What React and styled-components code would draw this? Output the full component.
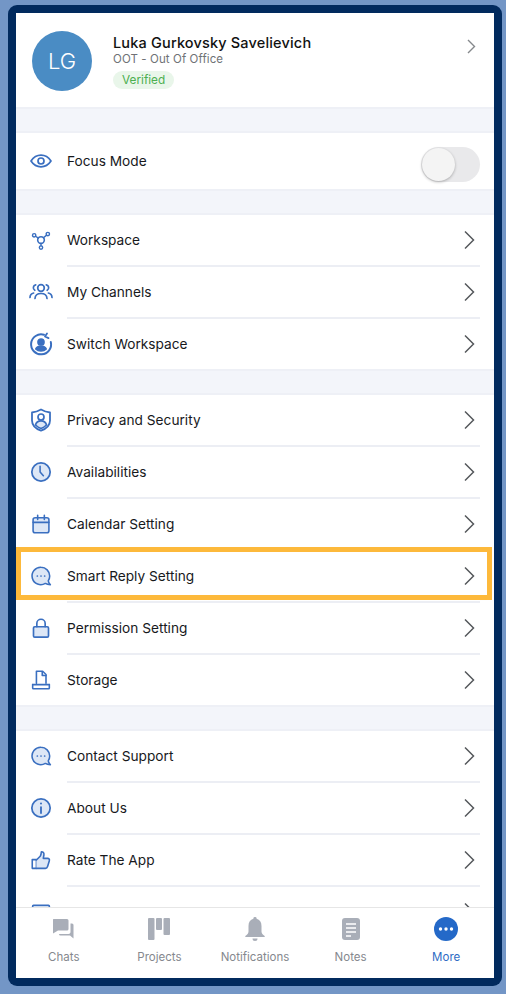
import React from 'react';
import styled, { createGlobalStyle } from 'styled-components';

const GlobalStyle = createGlobalStyle`
  html, body {
    margin: 0;
    padding: 0;
    background: #7396c6;
    font-family: Inter, "Noto Sans", sans-serif;
  }
  * { box-sizing: border-box; }
`;

const Page = styled.div`
  width: 506px;
  height: 994px;
  padding: 5px 4px 8px 8px;
  background: #7396c6;
`;

const Frame = styled.div`
  width: 494px;
  height: 981px;
  padding: 8px;
  background: #012a5e;
  border-radius: 9px;
`;

const Screen = styled.div`
  height: 100%;
  display: flex;
  flex-direction: column;
  background: #fff;
`;

const Scroll = styled.div`
  flex: 1;
  min-height: 0;
  overflow: hidden;
`;

const Profile = styled.div`
  height: 95px;
  display: flex;
  align-items: flex-start;
  padding: 18px 18px 0 16px;
`;

const Avatar = styled.div`
  width: 60px;
  height: 60px;
  flex: none;
  margin-right: 21px;
  border-radius: 50%;
  background: #4a8cc4;
  color: #fff;
  font-size: 22px;
  font-weight: 300;
  display: flex;
  align-items: center;
  justify-content: center;
`;

const ProfileInfo = styled.div`
  flex: 1;
  display: flex;
  flex-direction: column;
  align-items: flex-start;
  padding-top: 2px;
`;

const Name = styled.div`
  font-size: 14.5px;
  font-weight: 500;
  line-height: 19px;
  letter-spacing: 0.17px;
  color: #111;
`;

const Status = styled.div`
  font-size: 11.5px;
  line-height: 14px;
  letter-spacing: 0.1px;
  color: #6f7276;
`;

const Badge = styled.div`
  margin-top: 5px;
  height: 18px;
  padding: 0 9px;
  border-radius: 9px;
  background: #e9f6ea;
  color: #4caf50;
  font-size: 11.8px;
  line-height: 18px;
`;

const ProfileChevron = styled.div`
  align-self: flex-start;
  margin-top: 8px;
  display: flex;
`;

const Spacer = styled.div`
  height: 26px;
  margin: -1px 0;
  background: #f3f5fa;
  border-top: 2px solid #eef0f6;
  border-bottom: 2px solid #eef0f6;
`;

const FocusRow = styled.div`
  height: 58px;
  display: flex;
  align-items: center;
  padding: 0 14px 0 12px;
`;

const Row = styled.div`
  position: relative;
  height: 52px;
  display: flex;
  align-items: center;
  padding-left: 12px;

  ${(p) => p.$highlighted && `
    &::after {
      content: '';
      position: absolute;
      left: 0;
      right: 2px;
      top: -3px;
      bottom: 2px;
      border: 5.5px solid #fdb93b;
      z-index: 1;
    }
  `}
`;

const IconSlot = styled.div`
  width: 26px;
  height: 26px;
  flex: none;
  margin-right: 13px;
  display: flex;
  align-items: center;
  justify-content: center;
`;

const RowBody = styled.div`
  flex: 1;
  align-self: flex-start;
  height: ${(p) => (p.$last ? '52px' : '53px')};
  margin-right: 14px;
  display: flex;
  align-items: center;
  justify-content: space-between;
  padding-right: 5px;
  padding-top: ${(p) => (p.$last ? '0' : '1px')};
  border-bottom: ${(p) => (p.$last ? 'none' : '2px solid #eceef4')};
`;

const Label = styled.span`
  flex: ${(p) => (p.$grow ? 1 : 'none')};
  font-size: 13.7px;
  color: #17191c;
`;

const Toggle = styled.div`
  width: 59px;
  height: 35px;
  margin-top: 6px;
  padding: 1px;
  border-radius: 18px;
  background: #e9e9eb;
`;

const Knob = styled.div`
  width: 33px;
  height: 33px;
  border-radius: 50%;
  background: #f4f4f4;
  box-shadow: 0 1px 3px rgba(0, 0, 0, 0.28);
`;

const TabBar = styled.div`
  height: 71px;
  flex: none;
  display: grid;
  grid-template-columns: repeat(5, 1fr);
  background: #fff;
  border-top: 1px solid #e6e6e6;
`;

const Tab = styled.div`
  display: flex;
  flex-direction: column;
  align-items: center;
  padding-top: 8px;
  gap: 7px;
`;

const TabIcon = styled.div`
  height: 26px;
  display: flex;
  align-items: center;
  justify-content: center;
`;

const TabLabel = styled.span`
  font-size: 11.5px;
  line-height: 16px;
  color: ${(p) => (p.$active ? '#2f6cc4' : '#85888e')};
`;

const BLUE = '#3a6fc0';
const TINT = '#dde7f6';
const GREY = '#a9aeb8';

const Chevron = () => (
  <svg width="11" height="20" viewBox="0 0 11 20" fill="none">
    <path d="M1 1.5 9.5 10 1 18.5" stroke="#55585c" strokeWidth="1.5" />
  </svg>
);

const SmallChevron = () => (
  <svg width="9" height="15" viewBox="0 0 9 15" fill="none">
    <path d="M1 1 7.5 7.5 1 14" stroke="#85888c" strokeWidth="1.4" />
  </svg>
);

const Icon = ({ children, size = 24 }) => (
  <svg
    width={size}
    height={size}
    viewBox="0 0 24 24"
    fill="none"
    stroke={BLUE}
    strokeWidth="1.7"
    strokeLinecap="round"
    strokeLinejoin="round"
  >
    {children}
  </svg>
);

const EyeIcon = () => (
  <Icon>
    <path d="M2 12c2.600-3.900 6-5.800 10-5.800S19.400 8.100 22 12c-2.600 3.900-6 5.800-10 5.800S4.600 15.900 2 12Z" />
    <circle cx="12" cy="12" r="3" />
  </Icon>
);

const NodesIcon = () => (
  <Icon size={20}>
    <circle cx="12" cy="12" r="4" strokeWidth="1.900" />
    <circle cx="3.800" cy="6.300" r="2" />
    <circle cx="20.200" cy="4.800" r="2" />
    <circle cx="12" cy="21" r="2" />
    <path d="M5.500 7.500 8.800 9.700M18.700 6.200 15 9.300M12 16v3" />
  </Icon>
);

const PeopleIcon = () => (
  <Icon>
    <circle cx="12" cy="8" r="3.300" />
    <path d="M6 18.500c.2-3.300 2.600-5 6-5s5.800 1.700 6 5" />
    <path d="M6.700 4.800A3 3 0 0 0 5.800 10.300M17.300 4.800a3 3 0 0 1 .9 5.500" />
    <path d="M1 17.500c.1-2.500 1.500-4 3.600-4.500M23 17.500c-.1-2.500-1.500-4-3.600-4.500" />
  </Icon>
);

const SwitchIcon = () => (
  <Icon>
    <path d="M15 2.800A10 10 0 1 0 21.800 10" strokeWidth="2" />
    <path d="M18 1.500 16 4.500l3.500 1.600" strokeWidth="1.800" />
    <circle cx="12" cy="10" r="3" fill={BLUE} />
    <path d="M6.800 17c.8-2 2.800-3 5.200-3s4.400 1 5.200 3c-1.300 1.300-3.100 2-5.200 2s-3.900-.7-5.200-2Z" fill={BLUE} />
  </Icon>
);

const ShieldIcon = () => (
  <Icon>
    <path d="M12 1.500c2.800 1.600 5.600 2.600 9 3v8c0 4.700-3.600 8.200-9 10.200-5.400-2-9-5.500-9-10.200v-8c3.400-.4 6.200-1.400 9-3Z" strokeWidth="1.800" />
    <circle cx="12" cy="9" r="3" />
    <path d="M6.500 17c.6-2.800 2.700-4.200 5.500-4.200s4.900 1.400 5.500 4.200c-1.500 1.500-3.300 2.700-5.500 3.500-2.200-.8-4-2-5.500-3.500Z" fill={TINT} />
  </Icon>
);

const ClockIcon = () => (
  <Icon size={22}>
    <circle cx="12" cy="12" r="10" fill={TINT} strokeWidth="1.900" />
    <path d="M11 5.800V12l3.600 4" />
  </Icon>
);

const CalendarIcon = () => (
  <Icon size={20}>
    <rect x="2.500" y="4.500" width="19" height="18" rx="2.500" fill={TINT} strokeWidth="1.900" />
    <path d="M2.500 10h19M8 1.500v5M16 1.500v5" strokeWidth="1.900" />
  </Icon>
);

const ChatIcon = () => (
  <Icon size={22}>
    <path
      d="M12 2.500a9.500 9.500 0 0 1 9.500 9.500c0 2-.6 3.800-1.600 5.300.3 1.600 1.200 2.900 2.300 4.200-2.100 0-4-.4-5.500-1.400A9.500 9.500 0 1 1 12 2.500Z"
      fill={TINT}
    />
    <path d="M8 12h.01M12 12h.01M16 12h.01" strokeWidth="1.900" />
  </Icon>
);

const LockIcon = () => (
  <Icon size={20}>
    <rect x="3" y="10.500" width="18" height="12.500" rx="1.500" fill={TINT} strokeWidth="2" />
    <path d="M7 10.500V6.500a5 5 0 0 1 10 0v4" strokeWidth="2" />
  </Icon>
);

const StorageIcon = () => (
  <Icon size={20}>
    <path d="M6.500 16V1.500h7.500l4 4V16" strokeWidth="1.900" />
    <path d="M13.500 2v4.500H18" fill={TINT} strokeWidth="1.900" />
    <path d="M2 17.500v4c0 .6.400 1 1 1h18c.6 0 1-.4 1-1v-4" strokeWidth="1.900" />
    <path d="M2 17.500H22" strokeWidth="1.900" />
  </Icon>
);

const InfoIcon = () => (
  <Icon size={22}>
    <circle cx="12" cy="12" r="10" fill={TINT} strokeWidth="1.900" />
    <path d="M12 11v6.500" strokeWidth="2" />
    <path d="M12 7.100h.01" strokeWidth="2.200" />
  </Icon>
);

const ThumbIcon = () => (
  <Icon size={20}>
    <path d="M1.500 11.500h5v10.500h-5z" strokeWidth="1.900" />
    <path d="M6.500 12 11 7.500c1-1.300 1.300-3 1.500-5.500 2 0 3.300 1.500 3 4l-.8 4h5.300c1.500 0 2.500 1.300 2 2.800l-2 6.700c-.4 1.300-1.300 2.500-2.600 2.500H6.500" fill={TINT} strokeWidth="1.900" />
  </Icon>
);

const FlagIcon = () => (
  <Icon size={20}>
    <rect x="2" y="4" width="20" height="16" rx="1" strokeWidth="2" />
    <path d="M2 9h20" />
  </Icon>
);

const ChatsTab = () => (
  <svg width="24" height="22" viewBox="0 0 24 22" fill={GREY}>
    <path d="M1.500 1H15a1.500 1.500 0 0 1 1.500 1.500V11a1.500 1.500 0 0 1-1.500 1.500H6L1 15.500V1.800C1 1.400 1.200 1 1.500 1Z" />
    <path d="M18.500 5.500H20a1.500 1.500 0 0 1 1.500 1.500v13.500L18 17.500H8.500a1.500 1.500 0 0 1-1.500-1.500h9.500c1.100 0 2-.9 2-2Z" />
  </svg>
);

const ProjectsTab = () => (
  <svg width="22" height="22" viewBox="0 0 22 22" fill={GREY}>
    <rect x="0" y="0" width="6.500" height="22" rx="1" />
    <rect x="8" y="0" width="6" height="12" rx="1" />
    <rect x="15.500" y="0" width="6.500" height="17" rx="1" />
  </svg>
);

const BellTab = () => (
  <svg width="20" height="25" viewBox="0 0 20 25" fill={GREY}>
    <path d="M10 0a1.600 1.600 0 0 1 1.600 1.800C14.800 2.600 16.500 5 16.500 9v5.500c0 2 1.300 3.200 3.200 4.500v1H.3v-1c1.900-1.300 3.200-2.500 3.200-4.500V9c0-4 1.700-6.400 4.900-7.200A1.600 1.600 0 0 1 10 0Z" />
    <path d="M7.500 21.500h5a2.500 2.500 0 0 1-5 0Z" />
  </svg>
);

const NotesTab = () => (
  <svg width="18" height="22" viewBox="0 0 18 22">
    <rect width="18" height="22" rx="3" fill={GREY} />
    <path d="M4 6h10M4 10h10M4 14h10M4 18h5" stroke="#fff" strokeWidth="1.600" />
  </svg>
);

const MoreTab = () => (
  <svg width="24" height="24" viewBox="0 0 24 24">
    <circle cx="12" cy="12" r="12" fill="#2469c8" />
    <circle cx="6.500" cy="12" r="1.700" fill="#fff" />
    <circle cx="12" cy="12" r="1.700" fill="#fff" />
    <circle cx="17.500" cy="12" r="1.700" fill="#fff" />
  </svg>
);

const groups = [
  [
    { label: 'Workspace', icon: <NodesIcon /> },
    { label: 'My Channels', icon: <PeopleIcon /> },
    { label: 'Switch Workspace', icon: <SwitchIcon /> },
  ],
  [
    { label: 'Privacy and Security', icon: <ShieldIcon /> },
    { label: 'Availabilities', icon: <ClockIcon /> },
    { label: 'Calendar Setting', icon: <CalendarIcon /> },
    { label: 'Smart Reply Setting', icon: <ChatIcon />, highlighted: true },
    { label: 'Permission Setting', icon: <LockIcon /> },
    { label: 'Storage', icon: <StorageIcon /> },
  ],
  [
    { label: 'Contact Support', icon: <ChatIcon /> },
    { label: 'About Us', icon: <InfoIcon /> },
    { label: 'Rate The App', icon: <ThumbIcon /> },
    { label: 'Release Notes', icon: <FlagIcon /> },
  ],
];

const tabs = [
  { label: 'Chats', icon: <ChatsTab /> },
  { label: 'Projects', icon: <ProjectsTab /> },
  { label: 'Notifications', icon: <BellTab /> },
  { label: 'Notes', icon: <NotesTab /> },
  { label: 'More', icon: <MoreTab />, active: true },
];

const App = () => (
  <Page>
    <GlobalStyle />
    <Frame>
      <Screen>
        <Scroll>
          <Profile>
            <Avatar>LG</Avatar>
            <ProfileInfo>
              <Name>Luka Gurkovsky Savelievich</Name>
              <Status>OOT - Out Of Office</Status>
              <Badge>Verified</Badge>
            </ProfileInfo>
            <ProfileChevron><SmallChevron /></ProfileChevron>
          </Profile>
          <Spacer />
          <FocusRow>
            <IconSlot><EyeIcon /></IconSlot>
            <Label $grow>Focus Mode</Label>
            <Toggle><Knob /></Toggle>
          </FocusRow>
          {groups.map((items) => (
            <React.Fragment key={items[0].label}>
              <Spacer />
              {items.map((item, i) => (
                <Row key={item.label} $highlighted={item.highlighted}>
                  <IconSlot>{item.icon}</IconSlot>
                  <RowBody $last={i === items.length - 1}>
                    <Label>{item.label}</Label>
                    <Chevron />
                  </RowBody>
                </Row>
              ))}
            </React.Fragment>
          ))}
        </Scroll>
        <TabBar>
          {tabs.map((tab) => (
            <Tab key={tab.label}>
              <TabIcon>{tab.icon}</TabIcon>
              <TabLabel $active={tab.active}>{tab.label}</TabLabel>
            </Tab>
          ))}
        </TabBar>
      </Screen>
    </Frame>
  </Page>
);

export default App;
